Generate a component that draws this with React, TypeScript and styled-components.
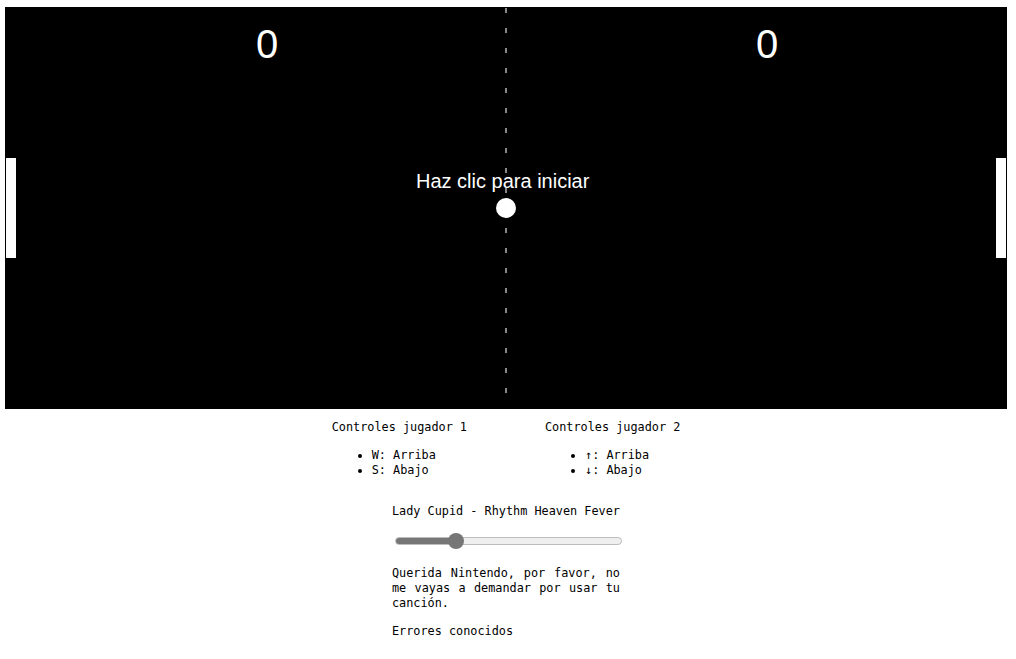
import React from 'react'
import styled, { createGlobalStyle } from 'styled-components'

const GlobalStyle = createGlobalStyle`
  body {
    margin: 0;
    background: #fff;
    color: #000;
  }
`

const Page = styled.div`
  width: 1002px;
  margin: 7px 0 0 5px;
  font-family: 'DejaVu Sans Mono', 'Liberation Mono', monospace;
  font-size: 11.83px;
  line-height: 15px;
`

const Field = styled.svg`
  display: block;
  width: 1000px;
  height: 400px;
  background: #000;
  border: 1px solid #000;
  font-family: 'Liberation Sans', Arial, sans-serif;
`

const Controls = styled.div`
  display: flex;
  justify-content: center;
  gap: 78px;
  margin-top: 11px;
`

const Column = styled.div`
  display: flex;
  flex-direction: column;
  gap: 13px;
`

const Heading = styled.p`
  margin: 0;
`

const KeyList = styled.ul`
  margin: 0;
  padding-left: 40px;
  list-style: disc;
`

const Music = styled.div`
  width: 228px;
  margin: 26px auto 0;
  display: flex;
  flex-direction: column;
`

const Track = styled.p`
  margin: 0;
`

const Slider = styled.input<{ $fill: number }>`
  -webkit-appearance: none;
  appearance: none;
  display: block;
  width: 227px;
  height: 16px;
  margin: 14px 0 0 3px;
  background: transparent;

  &::-webkit-slider-runnable-track {
    height: 8px;
    border-radius: 4px;
    border: 1px solid #bdbdbd;
    box-sizing: border-box;
    background: linear-gradient(
      to right,
      #767676 0 ${(p) => p.$fill}%,
      #efefef ${(p) => p.$fill}% 100%
    );
  }

  &::-webkit-slider-thumb {
    -webkit-appearance: none;
    width: 16px;
    height: 16px;
    margin-top: -5px;
    border-radius: 50%;
    background: #767676;
    border: none;
  }
`

const Note = styled.p`
  margin: 17px 0 13px;
  text-align: justify;
`

const Known = styled.p`
  margin: 0;
`

const controls = [
  { title: 'Controles jugador 1', keys: [['W', 'Arriba'], ['S', 'Abajo']] },
  { title: 'Controles jugador 2', keys: [['↑', 'Arriba'], ['↓', 'Abajo']] },
]

const App = (): JSX.Element => {
  const [volume, setVolume] = React.useState(25)
  // fill reaches the thumb centre: 8px thumb radius on a 227px track
  const fill = ((8 + (volume / 100) * 211) / 227) * 100

  return (
    <>
      <GlobalStyle />
      <Page>
        <Field viewBox="0 0 1000 400">
          <line x1={500} y1={0} x2={500} y2={400} stroke="#888" strokeWidth={2} strokeDasharray="5 15" />
          <text x={250} y={50} fill="#fff" fontSize={40}>
            0
          </text>
          <text x={750} y={50} fill="#fff" fontSize={40}>
            0
          </text>
          <rect x={0} y={150} width={10} height={100} fill="#fff" />
          <rect x={990} y={150} width={10} height={100} fill="#fff" />
          <text x={410} y={180} fill="#fff" fontSize={20}>
            Haz clic para iniciar
          </text>
          <circle cx={500} cy={200} r={10} fill="#fff" />
        </Field>

        <Controls>
          {controls.map((c) => (
            <Column key={c.title}>
              <Heading>{c.title}</Heading>
              <KeyList>
                {c.keys.map(([key, action]) => (
                  <li key={key}>
                    {key}: {action}
                  </li>
                ))}
              </KeyList>
            </Column>
          ))}
        </Controls>

        <Music>
          <Track>Lady Cupid - Rhythm Heaven Fever</Track>
          <Slider
            type="range"
            min={0}
            max={100}
            value={volume}
            $fill={fill}
            onChange={(e) => setVolume(Number(e.target.value))}
          />
          <Note>Querida Nintendo, por favor, no me vayas a demandar por usar tu canción.</Note>
          <Known>Errores conocidos</Known>
        </Music>
      </Page>
    </>
  )
}

export default App
